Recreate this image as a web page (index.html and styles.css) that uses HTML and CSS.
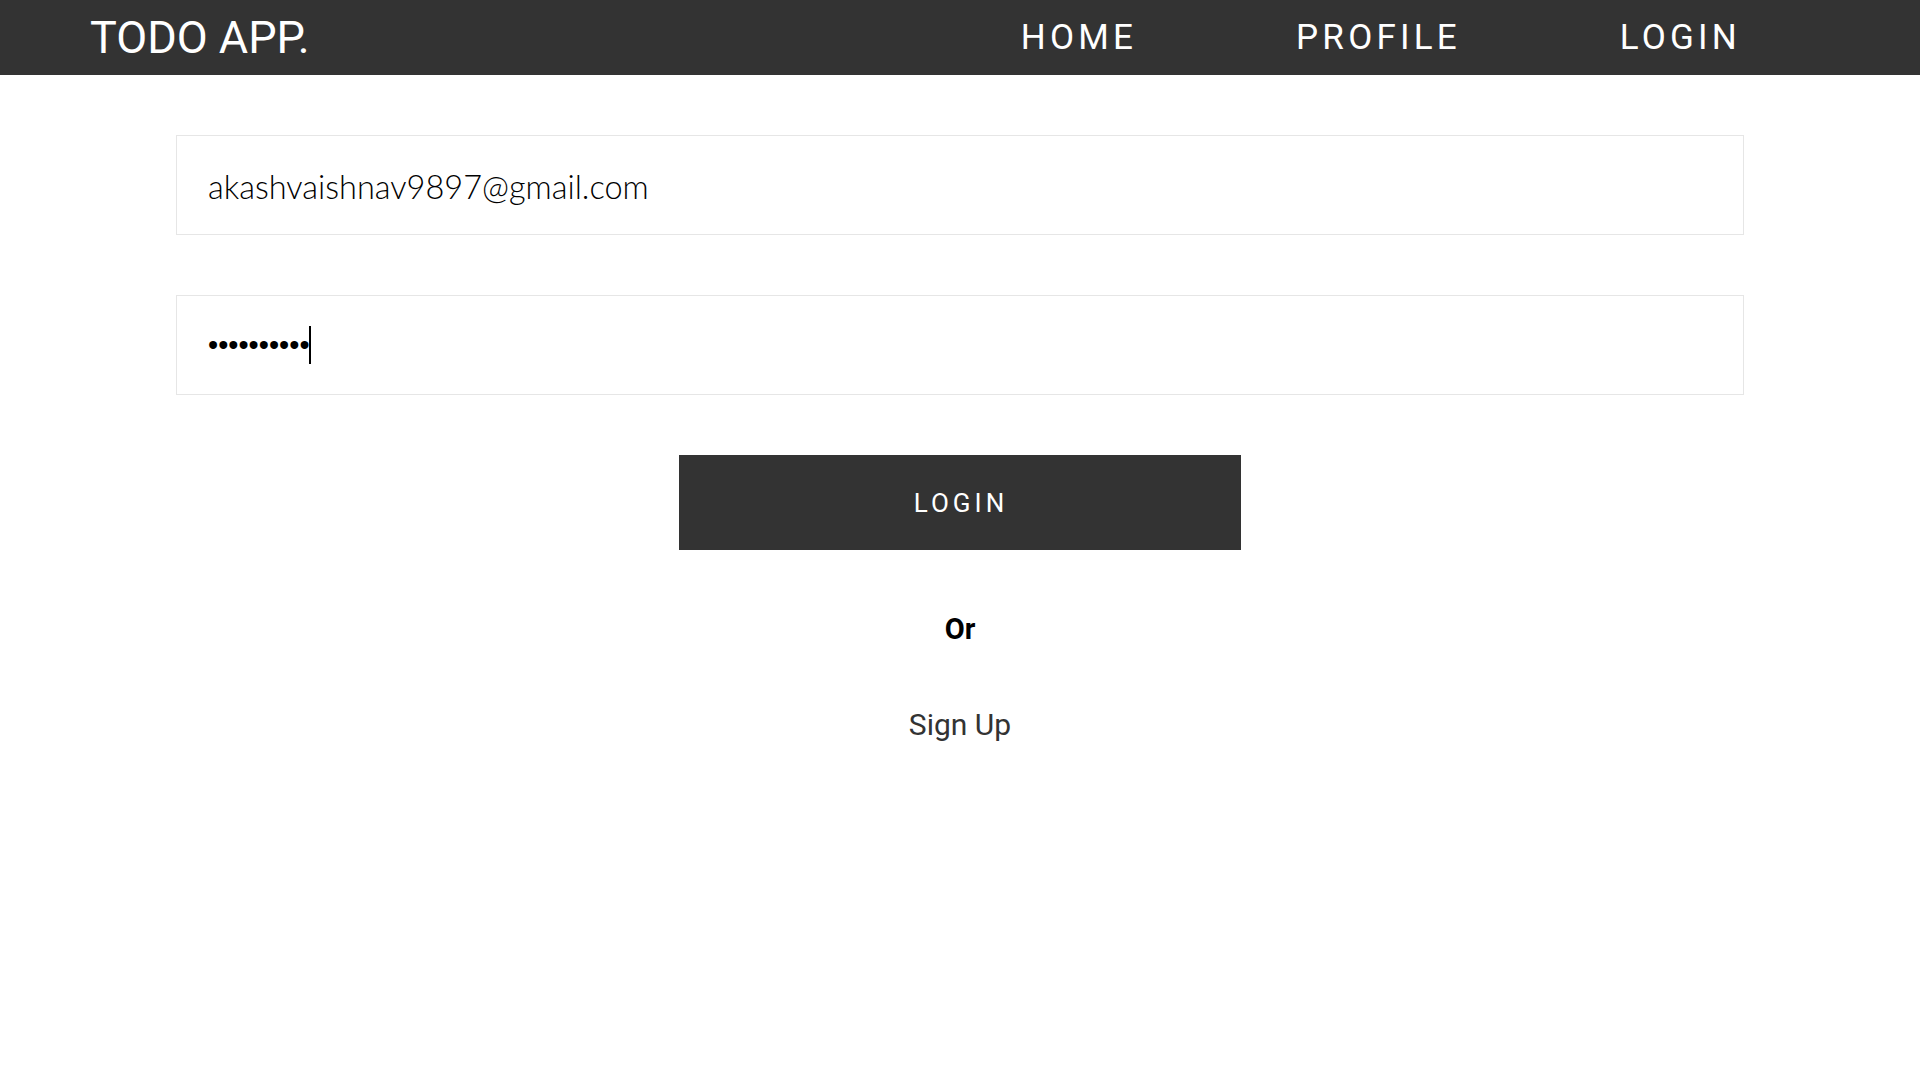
FILE: index.html
```html
<!DOCTYPE html>
<html lang="en">
<head>
<meta charset="utf-8">
<title>Todo App - Login</title>
<link rel="stylesheet" href="styles.css">
</head>
<body>
<header class="navbar">
  <div class="brand">TODO APP.</div>
  <nav class="nav-links">
    <a class="nav-link" href="#">HOME</a>
    <a class="nav-link" href="#">PROFILE</a>
    <a class="nav-link" href="#">LOGIN</a>
  </nav>
</header>
<main class="login">
  <div class="field"><span class="field-text">akashvaishnav9897@gmail.com</span></div>
  <div class="field"><span class="field-dots">••••••••••</span><span class="caret"></span></div>
  <button class="login-btn" type="button">LOGIN</button>
  <p class="or">Or</p>
  <a class="signup" href="#">Sign Up</a>
</main>
</body>
</html>
```
FILE: styles.css
```css
* { box-sizing: border-box; }
html, body { margin: 0; padding: 0; background: #fff; }
body { font-family: Roboto, "Liberation Sans", sans-serif; }

.navbar {
  height: 75px;
  background: #333333;
  display: flex;
  align-items: center;
  justify-content: space-between;
  padding: 0 179px 0 90px;
}
.brand {
  color: #fff;
  font-size: 45px;
  font-weight: 400;
  line-height: 1;
}
.nav-links {
  display: flex;
  gap: 159px;
}
.nav-link {
  color: #fff;
  text-decoration: none;
  font-size: 35px;
  letter-spacing: 4.2px;
  line-height: 1;
}

.login {
  padding: 60px 176px 0;
  display: flex;
  flex-direction: column;
  align-items: stretch;
}
.field {
  height: 100px;
  border: 1px solid #e6e6e6;
  display: flex;
  align-items: center;
  padding-left: 31px;
  margin-bottom: 60px;
}
.field-text {
  font-family: Lato, "Noto Sans", sans-serif;
  font-weight: 300;
  font-size: 32.5px;
  line-height: 40px;
  color: #000;
  padding-top: 3px;
}
.field-dots {
  font-family: "Liberation Sans", Arial, sans-serif;
  font-size: 29px;
  color: #000;
  line-height: 1;
}
.caret {
  display: inline-block;
  width: 2px;
  height: 38px;
  background: #000;
  margin-left: -1px;
}
.login-btn {
  align-self: center;
  width: 562px;
  height: 95px;
  margin: 0;
  border: none;
  background: #333333;
  color: #fff;
  font-family: Roboto, sans-serif;
  font-size: 26px;
  letter-spacing: 4px;
  padding: 0 0 0 2px;
}
.or {
  margin: 62px 0 0;
  text-align: center;
  font-size: 29px;
  font-weight: 700;
  line-height: 34px;
  color: #000;
}
.signup {
  align-self: center;
  margin-top: 62px;
  font-size: 30px;
  line-height: 34px;
  color: #333;
  text-decoration: none;
}
```
